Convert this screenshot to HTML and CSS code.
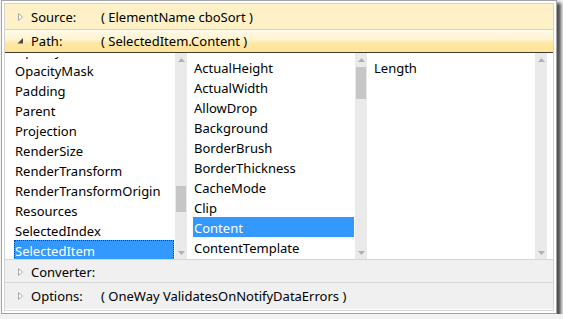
FILE: index.html
```html
<!DOCTYPE html>
<html>
<head>
  <title>Binding Path</title>
  <link rel="stylesheet" href="styles.css">
</head>
<body>
  <div class="window">
    <div class="panel">

      <div class="section section-source">
        <span class="expander">
          <svg width="8" height="10" viewBox="0 0 8 10"><polygon points="1.5,1.5 5.5,5 1.5,8.5" fill="#fff" stroke="#a8a8a8" stroke-width="1"/></svg>
        </span>
        <span class="label">Source:</span>
        <span class="value">( ElementName cboSort )</span>
      </div>

      <div class="section section-path">
        <span class="expander">
          <svg width="8" height="10" viewBox="0 0 8 10"><polygon points="6,2 6,7.5 0.5,7.5" fill="#4a4a4a"/></svg>
        </span>
        <span class="label">Path:</span>
        <span class="value">( SelectedItem.Content )</span>
      </div>

      <div class="lists">
        <div class="list">
          <div class="viewport">
            <ul class="items scrolled">
              <li>Opacity</li>
              <li>OpacityMask</li>
              <li>Padding</li>
              <li>Parent</li>
              <li>Projection</li>
              <li>RenderSize</li>
              <li>RenderTransform</li>
              <li>RenderTransformOrigin</li>
              <li>Resources</li>
              <li>SelectedIndex</li>
              <li class="selected focused">SelectedItem</li>
            </ul>
          </div>
        </div>
        <div class="scrollbar">
          <div class="arrow"><svg width="7" height="4" viewBox="0 0 7 4"><polygon points="0,4 7,4 3.5,0" fill="#b0b0b0"/></svg></div>
          <div class="track"><div class="thumb" style="margin-top: 120px; height: 26px;"></div></div>
          <div class="arrow"><svg width="7" height="4" viewBox="0 0 7 4"><polygon points="0,0 7,0 3.5,4" fill="#b0b0b0"/></svg></div>
        </div>

        <div class="list">
          <div class="viewport">
            <ul class="items">
              <li>ActualHeight</li>
              <li>ActualWidth</li>
              <li>AllowDrop</li>
              <li>Background</li>
              <li>BorderBrush</li>
              <li>BorderThickness</li>
              <li>CacheMode</li>
              <li>Clip</li>
              <li class="selected">Content</li>
              <li>ContentTemplate</li>
            </ul>
          </div>
        </div>
        <div class="scrollbar">
          <div class="arrow"><svg width="7" height="4" viewBox="0 0 7 4"><polygon points="0,4 7,4 3.5,0" fill="#b0b0b0"/></svg></div>
          <div class="track"><div class="thumb" style="margin-top: 1px; height: 32px;"></div></div>
          <div class="arrow"><svg width="7" height="4" viewBox="0 0 7 4"><polygon points="0,0 7,0 3.5,4" fill="#b0b0b0"/></svg></div>
        </div>

        <div class="list">
          <div class="viewport">
            <ul class="items">
              <li>Length</li>
            </ul>
          </div>
        </div>
        <div class="scrollbar">
          <div class="arrow"><svg width="7" height="4" viewBox="0 0 7 4"><polygon points="0,4 7,4 3.5,0" fill="#b0b0b0"/></svg></div>
          <div class="track"></div>
          <div class="arrow"><svg width="7" height="4" viewBox="0 0 7 4"><polygon points="0,0 7,0 3.5,4" fill="#b0b0b0"/></svg></div>
        </div>
        <div></div>
      </div>

      <div class="section section-converter">
        <span class="expander">
          <svg width="8" height="10" viewBox="0 0 8 10"><polygon points="1.5,1.5 5.5,5 1.5,8.5" fill="#fff" stroke="#a8a8a8" stroke-width="1"/></svg>
        </span>
        <span class="label">Converter:</span>
      </div>

      <div class="section section-options">
        <span class="expander">
          <svg width="8" height="10" viewBox="0 0 8 10"><polygon points="1.5,1.5 5.5,5 1.5,8.5" fill="#fff" stroke="#a8a8a8" stroke-width="1"/></svg>
        </span>
        <span class="label">Options:</span>
        <span class="value">( OneWay ValidatesOnNotifyDataErrors )</span>
      </div>

    </div>
  </div>
</body>
</html>
```

FILE: styles.css
```css
body {
  margin: 0;
  background: #f2f2f2;
  font-family: "Noto Sans", "Open Sans", sans-serif;
  font-size: 13px;
  color: #000;
}

.window {
  box-sizing: border-box;
  width: 556px;
  height: 314px;
  margin-left: 1px;
  padding: 2px;
  background: #fff;
  border: 1px solid #a4a4a4;
  box-shadow: 4px 3px 3px rgba(40, 40, 40, 0.8);
}

.panel {
  box-sizing: border-box;
  height: 308px;
  border: 1px solid #d3d3d3;
  display: flex;
  flex-direction: column;
}

.section {
  display: flex;
  align-items: center;
  padding-left: 12px;
  flex-shrink: 0;
}

.expander {
  width: 14px;
  display: flex;
  align-items: center;
}

.label {
  width: 70px;
}

.section-source {
  height: 25px;
  background: #fef1c8;
  border-bottom: 1px solid #d2d2d2;
}

.section-path {
  height: 22px;
  background: linear-gradient(#fffaeb 0%, #fff3cf 45%, #ffe7a2 60%, #ffe598 100%);
  border-bottom: 1px solid #3f3b2e;
}

.section-converter {
  height: 23px;
  padding-top: 1px;
  box-sizing: border-box;
  background: #f0f0f0;
  border-top: 1px solid #d6d6d6;
}

.section-options {
  height: 26px;
  background: #f0f0f0;
  border-top: 1px solid #d6d6d6;
}

.lists {
  height: 206px;
  flex-shrink: 0;
  display: grid;
  grid-template-columns: 170px 12px 168px 12px 168px 12px 6px;
  background: #fff;
  overflow: hidden;
}

.list {
  overflow: hidden;
  padding: 4px 1px 0 6px;
}

.list:first-child {
  padding-left: 9px;
}

.viewport {
  height: 100%;
  overflow: hidden;
}

.items {
  list-style: none;
  margin: 0;
  padding: 0;
}

.items.scrolled {
  margin-top: -17px;
}

.items li {
  height: 19px;
  padding-top: 1px;
  padding-left: 1px;
  line-height: 20px;
  white-space: nowrap;
}

.items li.selected {
  background: #3399ff;
  color: #fff;
}

.items li.focused {
  outline: 1px dotted #1d3f75;
  outline-offset: -1px;
}

.scrollbar {
  display: flex;
  flex-direction: column;
  background: #eaeaea;
}

.scrollbar .arrow {
  height: 13px;
  display: flex;
  align-items: center;
  justify-content: center;
}

.scrollbar .track {
  flex: 1;
}

.scrollbar .thumb {
  margin-left: 1px;
  margin-right: 1px;
  background: #c6c6c6;
}
```
